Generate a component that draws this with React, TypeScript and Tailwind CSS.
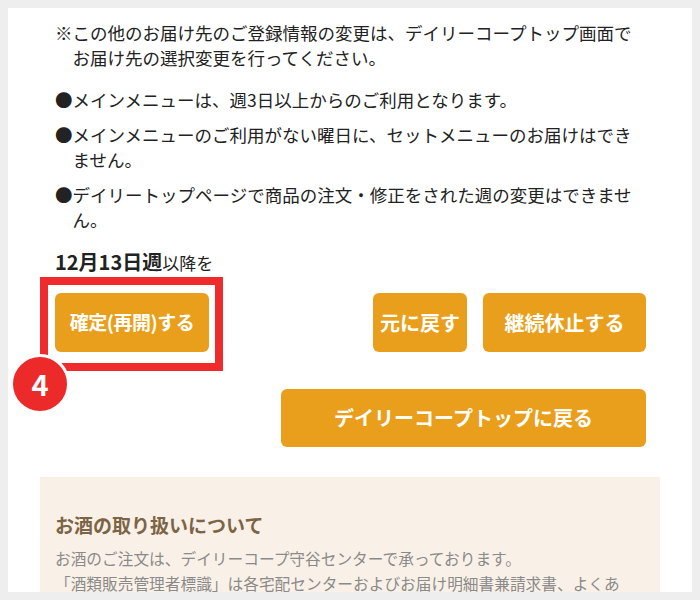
const notes = [
  "※この他のお届け先のご登録情報の変更は、デイリーコープトップ画面でお届け先の選択変更を行ってください。",
  "●メインメニューは、週3日以上からのご利用となります。",
  "●メインメニューのご利用がない曜日に、セットメニューのお届けはできません。",
  "●デイリートップページで商品の注文・修正をされた週の変更はできません。",
];

export default function App() {
  return (
    <div
      className="h-[600px] overflow-hidden bg-[#eeeeee] p-2"
      style={{ fontFamily: '"Noto Sans CJK JP", "Noto Sans", sans-serif' }}
    >
      <div className="h-[584px] overflow-hidden bg-white">
        <div className="pl-[47px] pt-[12px]">
          <div className="w-[591px] text-[17.5px] leading-[25px] text-[#222]">
            {notes.map((n, i) => (
              <p
                key={n}
                className={`pl-[1em] -indent-[1em] ${i === 0 ? "mb-[17px]" : "mb-[10px]"}`}
              >
                {n}
              </p>
            ))}
            <p className="mt-[16px] leading-[28px] text-[#222]">
              <span className="text-[20px] font-bold">12月13日週</span>
              <span className="text-[17px]">以降を</span>
            </p>
          </div>

          <div className="mt-[16px] flex w-[591px] items-start justify-between">
            <div className="relative">
              <button className="h-[59px] w-[154px] rounded-md bg-[#e99f1b] text-[19px] font-bold tracking-tight text-white">
                確定(再開)する
              </button>
              <div className="pointer-events-none absolute left-[-15px] top-[-16px] h-[94px] w-[183px] border-[8px] border-[#f02b2b]" />
              <div className="absolute left-[-45px] top-[61px] flex h-[60px] w-[60px] items-center justify-center rounded-full border-[3px] border-white bg-[#ec2a2a] text-[29px] font-bold text-white">
                4
              </div>
            </div>
            <div className="flex gap-4">
              <button className="h-[59px] w-[94px] rounded-md bg-[#e99f1b] text-[20px] font-bold text-white">
                元に戻す
              </button>
              <button className="h-[59px] w-[163px] rounded-md bg-[#e99f1b] text-[20px] font-bold text-white">
                継続休止する
              </button>
            </div>
          </div>

          <div className="mt-[37px] flex w-[591px] justify-end">
            <button className="h-[58px] w-[365px] rounded-md bg-[#e99f1b] text-[20px] font-bold text-white">
              デイリーコープトップに戻る
            </button>
          </div>
        </div>

        <div className="ml-8 mt-[30px] w-[620px] bg-[#f9f1e8] px-[15px] pt-[34px] pb-6">
          <h3 className="text-[19px] font-bold text-[#7d6445]">お酒の取り扱いについて</h3>
          <p className="mt-[6px] w-[575px] text-[15.7px] leading-[25px] text-[#8a8a8a]">
            お酒のご注文は、デイリーコープ守谷センターで承っております。
            <br />
            「酒類販売管理者標識」は各宅配センターおよびお届け明細書兼請求書、よくあるご質問にてご確認いただけます。
          </p>
        </div>
      </div>
    </div>
  );
}
